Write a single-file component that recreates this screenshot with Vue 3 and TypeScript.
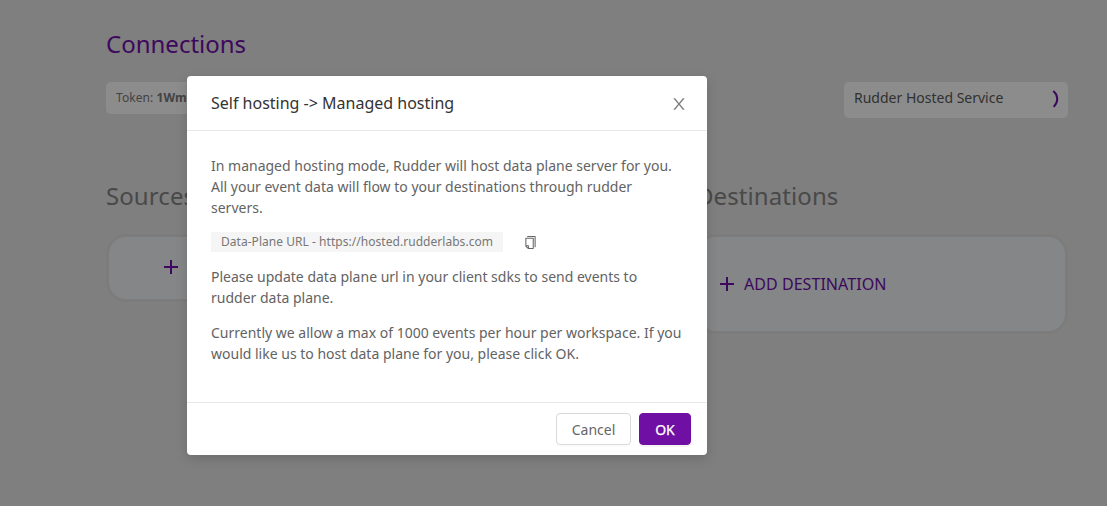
<script setup lang="ts">
import { ref } from 'vue'

const open = ref<boolean>(true)
const serviceName = 'Rudder Hosted Service'
const dataPlaneUrl = 'https://hosted.rudderlabs.com'
</script>

<template>
  <div class="page">
    <main class="content">
      <h2 class="title">Connections</h2>
      <div class="toolbar">
        <div class="token">Token: <b>1Wmu</b></div>
        <div class="service">
          <span>{{ serviceName }}</span>
          <svg class="spinner" width="8" height="20" viewBox="0 0 8 20">
            <path d="M1.8 2.6C6.3 6.4 6.3 13.2 2.2 17.2" />
          </svg>
        </div>
      </div>
      <div class="columns">
        <section class="sources">
          <h3>Sources</h3>
          <div class="card small">
            <svg class="plus" width="14" height="14" viewBox="0 0 14 14"><path d="M7 0v14M0 7h14" /></svg>
          </div>
        </section>
        <section class="destinations">
          <h3>Destinations</h3>
          <div class="card large">
            <svg class="plus" width="14" height="14" viewBox="0 0 14 14"><path d="M7 0v14M0 7h14" /></svg>
            <span>ADD DESTINATION</span>
          </div>
        </section>
      </div>
    </main>

    <div v-if="open" class="mask">
      <div class="modal" role="dialog">
        <header class="modal-head">
          <span>Self hosting -&gt; Managed hosting</span>
          <svg class="close" width="18" height="18" viewBox="0 0 1024 1024" @click="open = false">
            <path d="M563.8 512l262.5-312.9c4.4-5.2.7-13.1-6.1-13.1h-79.8c-4.7 0-9.2 2.1-12.3 5.7L511.6 449.8 295.1 191.7c-3-3.6-7.5-5.7-12.3-5.7H203c-6.8 0-10.5 7.9-6.1 13.1L459.4 512 196.9 824.9A7.95 7.95 0 0 0 203 838h79.8c4.7 0 9.2-2.1 12.3-5.7l216.5-258.1 216.5 258.1c3 3.6 7.5 5.7 12.3 5.7h79.8c6.8 0 10.5-7.9 6.1-13.1L563.8 512z" />
          </svg>
        </header>
        <div class="modal-body">
          <p>In managed hosting mode, Rudder will host data plane server for you. All your event data will flow to your destinations through rudder servers.</p>
          <div class="url-row">
            <span class="url">Data-Plane URL - {{ dataPlaneUrl }}</span>
            <svg class="copy" width="15" height="15" viewBox="0 0 1024 1024">
              <path d="M832 64H296c-4.4 0-8 3.6-8 8v56c0 4.4 3.6 8 8 8h496v688c0 4.4 3.6 8 8 8h56c4.4 0 8-3.6 8-8V96c0-17.7-14.3-32-32-32zM704 192H192c-17.7 0-32 14.3-32 32v530.7c0 8.5 3.4 16.6 9.4 22.6l173.3 173.3c2.2 2.2 4.7 4 7.4 5.5v1.9h4.2c3.5 1.3 7.2 2 11 2H704c17.7 0 32-14.3 32-32V224c0-17.7-14.3-32-32-32zM350 856.2L263.9 770H350v86.2zM664 888H414V746c0-22.1-17.9-40-40-40H232V264h432v624z" />
            </svg>
          </div>
          <p>Please update data plane url in your client sdks to send events to rudder data plane.</p>
          <p>Currently we allow a max of 1000 events per hour per workspace. If you would like us to host data plane for you, please click OK.</p>
        </div>
        <footer class="modal-foot">
          <button class="btn" @click="open = false">Cancel</button>
          <button class="btn primary" @click="open = false">OK</button>
        </footer>
      </div>
    </div>
  </div>
</template>

<style>
body {
  margin: 0;
}
</style>

<style scoped>
* {
  box-sizing: border-box;
}
.page {
  position: relative;
  width: 1107px;
  height: 506px;
  overflow: hidden;
  background: #e7e7e7;
  font-family: "Noto Sans", sans-serif;
  font-size: 14px;
  color: #636363;
}
.content {
  padding: 26px 39px 0 106px;
}
.title {
  margin: 0;
  font-size: 24px;
  line-height: 36px;
  font-weight: 400;
  color: #6f0fa9;
}
.toolbar {
  display: flex;
  justify-content: space-between;
  align-items: flex-start;
  margin-top: 20px;
  height: 36px;
}
.token {
  width: 240px;
  height: 32px;
  padding: 0 10px;
  border-radius: 5px;
  background: #fff;
  font-size: 12px;
  line-height: 32px;
  letter-spacing: 0.08px;
  color: #7a7a7a;
  white-space: nowrap;
  overflow: hidden;
}
.service {
  display: flex;
  justify-content: space-between;
  width: 224px;
  height: 36px;
  padding: 5px 8px 0 10px;
  border-radius: 5px;
  background: #fff;
  line-height: 21px;
  color: #595959;
}
.spinner {
  margin-top: 2px;
  fill: none;
  stroke: #6f0fa9;
  stroke-width: 2;
  stroke-linecap: round;
}
.columns {
  display: flex;
  justify-content: space-between;
  margin-top: 60px;
}
.sources {
  width: 270px;
}
.destinations {
  width: 372px;
}
h3 {
  margin: 0 0 20px;
  font-size: 24px;
  line-height: 36px;
  font-weight: 400;
  letter-spacing: 0.08px;
  color: #858585;
}
.card {
  display: flex;
  align-items: center;
  border: 3px solid #e2e2e2;
  border-radius: 20px;
  background: #f2f5f7;
  color: #6f0fa9;
  font-size: 16px;
}
.small {
  height: 68px;
  padding: 0 0 2px 55px;
}
.large {
  height: 100px;
  padding-left: 21px;
  gap: 10px;
}
.large span {
  letter-spacing: 0.05px;
}
.plus {
  stroke: #6f0fa9;
  stroke-width: 2;
}
.mask {
  position: absolute;
  inset: 0;
  display: flex;
  align-items: flex-start;
  padding: 76px 0 0 187px;
  background: rgba(0, 0, 0, 0.45);
}
.modal {
  width: 520px;
  border-radius: 4px;
  background: #fff;
  box-shadow: 0 4px 12px rgba(0, 0, 0, 0.15);
}
.modal-head {
  display: flex;
  justify-content: space-between;
  align-items: center;
  height: 55px;
  padding: 0 19px 0 24px;
  border-bottom: 1px solid #e8e8e8;
  font-size: 16px;
  line-height: 22px;
  color: #333;
}
.close {
  margin-top: 1px;
  fill: #808080;
}
.modal-body {
  padding: 24px 24px 10px;
  height: 271px;
  line-height: 21px;
}
.modal-body p {
  margin: 0 0 14px;
}
.url-row {
  display: flex;
  align-items: center;
  gap: 20px;
  height: 20px;
  margin-bottom: 14px;
}
.url {
  width: 292px;
  padding-left: 10px;
  background: #f5f5f5;
  font-size: 12px;
  line-height: 20px;
  letter-spacing: 0.04px;
  color: #777;
  white-space: nowrap;
}
.copy {
  fill: #666;
}
.modal-foot {
  display: flex;
  justify-content: flex-end;
  gap: 8px;
  height: 53px;
  padding: 10px 16px;
  border-top: 1px solid #e8e8e8;
}
.btn {
  width: 75px;
  height: 32px;
  padding: 0;
  border: 1px solid #d9d9d9;
  border-radius: 4px;
  background: #fff;
  font: 14px "Noto Sans", sans-serif;
  color: #666;
  box-shadow: 0 2px 0 rgba(0, 0, 0, 0.015);
}
.primary {
  width: 52px;
  border-color: #6f0fa3;
  background: #6f0fa3;
  color: #fff;
  -webkit-text-stroke: 0.25px #fff;
  box-shadow: 0 2px 0 rgba(0, 0, 0, 0.045);
}
</style>
